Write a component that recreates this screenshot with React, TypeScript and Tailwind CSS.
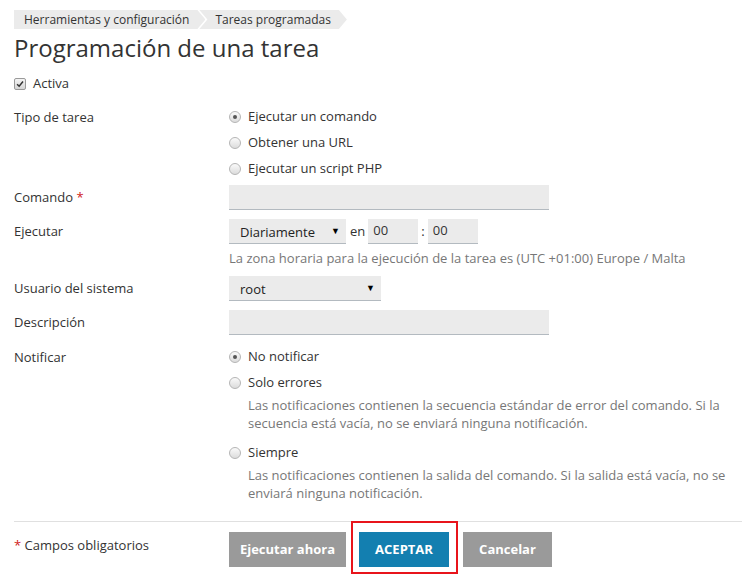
import React from 'react';

const font = { fontFamily: '"Open Sans", "Liberation Sans", sans-serif' };

function Radio({ checked }: { checked?: boolean }) {
  return (
    <span className="inline-flex h-[12px] w-[12px] shrink-0 items-center justify-center rounded-full border border-[#b5b5b5] bg-gradient-to-b from-[#fafafa] to-[#dcdcdc]">
      {checked && <span className="h-[4px] w-[4px] rounded-full bg-[#555]" />}
    </span>
  );
}

function RadioRow({ label, checked }: { label: string; checked?: boolean }) {
  return (
    <div className="flex h-[26px] items-center gap-[7px]">
      <Radio checked={checked} />
      <span>{label}</span>
    </div>
  );
}

function Field({ label, required, children, align = 'center' }: { label: string; required?: boolean; children: React.ReactNode; align?: 'center' | 'start' }) {
  return (
    <div className={`flex ${align === 'center' ? 'items-center' : 'items-start'}`}>
      <div className={`w-[215px] shrink-0 ${align === 'start' ? 'leading-[26px]' : ''}`}>
        {label}
        {required && <span className="text-[#d02020]"> *</span>}
      </div>
      <div>{children}</div>
    </div>
  );
}

function TextInput({ w, value }: { w: string; value?: string }) {
  return (
    <div className={`${w} flex h-[25px] items-center border-b border-[#b3bac0] bg-[#ebebeb] px-[5px] text-[#333]`}>
      {value}
    </div>
  );
}

function Select({ w, value }: { w: string; value: string }) {
  return (
    <div className={`${w} flex h-[25px] items-center justify-between border-b border-[#b3bac0] bg-[#ebebeb] pl-[11px] pr-[6px] pt-[3px] text-[#222]`}>
      <span>{value}</span>
      <span className="-mt-[3px] text-[9px] text-black">▼</span>
    </div>
  );
}

export default function App() {
  return (
    <div className="min-h-[580px] w-[742px] bg-white text-[13px] text-[#333]" style={font}>
      <div className="pl-[14px]">
        {/* Breadcrumbs */}
        <div className="flex pt-[10px] text-[12px] text-[#333]">
          <div className="flex h-[19px] items-center bg-[#ebebeb] pl-[10px] pr-[16px] [clip-path:polygon(0_0,calc(100%-8px)_0,100%_50%,calc(100%-8px)_100%,0_100%)]">
            Herramientas y configuración
          </div>
          <div className="-ml-[6px] flex h-[19px] items-center bg-[#ebebeb] pl-[16px] pr-[16px] [clip-path:polygon(0_0,calc(100%-8px)_0,100%_50%,calc(100%-8px)_100%,0_100%,8px_50%)]">
            Tareas programadas
          </div>
        </div>

        <h1 className="mt-[4px] text-[24px] leading-[30px] text-[#333]">Programación de una tarea</h1>

        <div className="mt-[11px] flex h-[20px] items-center gap-[7px]">
          <span className="flex h-[12px] w-[12px] items-center justify-center rounded-[2px] border border-[#9a9a9a] bg-gradient-to-b from-[#f4f4f4] to-[#d6d6d6]">
            <svg viewBox="0 0 12 12" className="h-[10px] w-[10px]">
              <path d="M2.5 6.2 L5 8.6 L9.6 3" fill="none" stroke="#333" strokeWidth="1.8" />
            </svg>
          </span>
          <span>Activa</span>
        </div>

        <div className="mt-[10px]">
          <Field label="Tipo de tarea" align="start">
            <RadioRow label="Ejecutar un comando" checked />
            <RadioRow label="Obtener una URL" />
            <RadioRow label="Ejecutar un script PHP" />
          </Field>
        </div>

        <div className="mt-[3px]">
          <Field label="Comando" required>
            <TextInput w="w-[320px]" />
          </Field>
        </div>

        <div className="mt-[9px]">
          <Field label="Ejecutar">
            <div className="flex items-center">
              <Select w="w-[117px]" value="Diariamente" />
              <span className="ml-[4px] mr-[3px]">en</span>
              <TextInput w="w-[50px]" value="00" />
              <span className="mx-[3px]">:</span>
              <TextInput w="w-[50px]" value="00" />
            </div>
          </Field>
        </div>
        <div className="mt-[5px] pl-[215px] leading-[18px] text-[#777]">
          La zona horaria para la ejecución de la tarea es (UTC +01:00) Europe / Malta
        </div>

        <div className="mt-[9px]">
          <Field label="Usuario del sistema">
            <Select w="w-[152px]" value="root" />
          </Field>
        </div>

        <div className="mt-[9px]">
          <Field label="Descripción">
            <TextInput w="w-[320px]" />
          </Field>
        </div>

        <div className="mt-[9px]">
          <Field label="Notificar" align="start">
            <RadioRow label="No notificar" checked />
            <RadioRow label="Solo errores" />
            <p className="w-[500px] pl-[19px] leading-[18px] text-[#777]">
              Las notificaciones contienen la secuencia estándar de error del comando. Si la secuencia está vacía, no se enviará ninguna notificación.
            </p>
            <div className="mt-[8px]">
              <RadioRow label="Siempre" />
            </div>
            <p className="w-[500px] pl-[19px] leading-[18px] text-[#777]">
              Las notificaciones contienen la salida del comando. Si la salida está vacía, no se enviará ninguna notificación.
            </p>
          </Field>
        </div>

        <div className="mt-[19px] border-t border-[#e0e0e0]" />

        <div className="mt-[10px] flex items-start">
          <div className="w-[215px] pt-[4px]">
            <span className="text-[#d02020]">*</span> Campos obligatorios
          </div>
          <div className="flex items-center text-[13px] font-bold text-white" style={{ fontFamily: '"Liberation Sans Narrow", "Open Sans", sans-serif' }}>
            <button className="flex h-[35px] w-[117px] items-center justify-center bg-[#9a9a9a]">Ejecutar ahora</button>
            <div className="relative ml-[13px]">
              <div className="absolute -bottom-[7px] -left-[8px] -right-[9px] -top-[11px] border-2 border-[#e8141b]" />
              <button className="relative flex h-[35px] w-[90px] items-center justify-center bg-[#137fb0]">ACEPTAR</button>
            </div>
            <button className="ml-[14px] flex h-[35px] w-[89px] items-center justify-center bg-[#9a9a9a]">Cancelar</button>
          </div>
        </div>
      </div>
    </div>
  );
}
